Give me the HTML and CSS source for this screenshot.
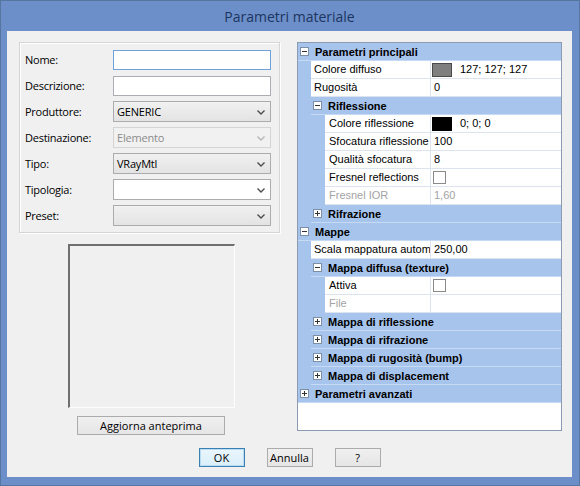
FILE: index.html
```html
<!DOCTYPE html>
<html lang="it">
<head>
<meta charset="utf-8">
<title>Parametri materiale</title>
<link rel="stylesheet" href="styles.css">
</head>
<body>
<div class="window">
  <div class="titlebar">Parametri materiale</div>
  <div class="client">
    <div class="main">
      <div class="left">
        <div class="group">
          <div class="field"><span class="lbl">Nome:</span><div class="input focus"></div></div>
          <div class="field"><span class="lbl">Descrizione:</span><div class="input"></div></div>
          <div class="field"><span class="lbl">Produttore:</span><div class="select">GENERIC<svg class="chev" viewBox="0 0 8 5" width="8" height="5"><polyline points="0.5,0.5 4,4 7.5,0.5" fill="none" stroke="#4d4d4d" stroke-width="1.4"/></svg></div></div>
          <div class="field"><span class="lbl">Destinazione:</span><div class="select disabled">Elemento<svg class="chev" viewBox="0 0 8 5" width="8" height="5"><polyline points="0.5,0.5 4,4 7.5,0.5" fill="none" stroke="#b5b5b5" stroke-width="1.4"/></svg></div></div>
          <div class="field"><span class="lbl">Tipo:</span><div class="select">VRayMtl<svg class="chev" viewBox="0 0 8 5" width="8" height="5"><polyline points="0.5,0.5 4,4 7.5,0.5" fill="none" stroke="#4d4d4d" stroke-width="1.4"/></svg></div></div>
          <div class="field"><span class="lbl">Tipologia:</span><div class="select white"><svg class="chev" viewBox="0 0 8 5" width="8" height="5"><polyline points="0.5,0.5 4,4 7.5,0.5" fill="none" stroke="#4d4d4d" stroke-width="1.4"/></svg></div></div>
          <div class="field"><span class="lbl">Preset:</span><div class="select"><svg class="chev" viewBox="0 0 8 5" width="8" height="5"><polyline points="0.5,0.5 4,4 7.5,0.5" fill="none" stroke="#4d4d4d" stroke-width="1.4"/></svg></div></div>
        </div>
        <div class="preview"></div>
        <button class="btn preview-btn">Aggiorna anteprima</button>
      </div>
      <div class="grid">
        <div class="row cat"><div class="cbody"><span class="exp minus"></span>Parametri principali</div></div>
        <div class="row"><div class="ind l1"></div><div class="name n1">Colore diffuso</div><div class="val"><span class="swatch gray"></span>127; 127; 127</div></div>
        <div class="row"><div class="ind l1"></div><div class="name n1">Rugosità</div><div class="val">0</div></div>
        <div class="row cat"><div class="ind l1"></div><div class="cbody"><span class="exp minus"></span>Riflessione</div></div>
        <div class="row"><div class="ind l2"></div><div class="name n2">Colore riflessione</div><div class="val"><span class="swatch black"></span>0; 0; 0</div></div>
        <div class="row"><div class="ind l2"></div><div class="name n2">Sfocatura riflessione</div><div class="val">100</div></div>
        <div class="row"><div class="ind l2"></div><div class="name n2">Qualità sfocatura</div><div class="val">8</div></div>
        <div class="row"><div class="ind l2"></div><div class="name n2">Fresnel reflections</div><div class="val"><span class="check"></span></div></div>
        <div class="row"><div class="ind l2"></div><div class="name n2 dis">Fresnel IOR</div><div class="val dis">1,60</div></div>
        <div class="row cat"><div class="ind l1"></div><div class="cbody"><span class="exp plus"></span>Rifrazione</div></div>
        <div class="row cat"><div class="cbody"><span class="exp minus"></span>Mappe</div></div>
        <div class="row"><div class="ind l1"></div><div class="name n1"><span class="clip">Scala mappatura automatica</span></div><div class="val">250,00</div></div>
        <div class="row cat"><div class="ind l1"></div><div class="cbody"><span class="exp minus"></span>Mappa diffusa (texture)</div></div>
        <div class="row"><div class="ind l2"></div><div class="name n2">Attiva</div><div class="val"><span class="check"></span></div></div>
        <div class="row"><div class="ind l2"></div><div class="name n2 dis">File</div><div class="val"></div></div>
        <div class="row cat"><div class="ind l1"></div><div class="cbody"><span class="exp plus"></span>Mappa di riflessione</div></div>
        <div class="row cat"><div class="ind l1"></div><div class="cbody"><span class="exp plus"></span>Mappa di rifrazione</div></div>
        <div class="row cat"><div class="ind l1"></div><div class="cbody"><span class="exp plus"></span>Mappa di rugosità (bump)</div></div>
        <div class="row cat"><div class="ind l1"></div><div class="cbody"><span class="exp plus"></span>Mappa di displacement</div></div>
        <div class="row cat"><div class="cbody"><span class="exp plus"></span>Parametri avanzati</div></div>
      </div>
    </div>
    <div class="footer">
      <button class="btn default">OK</button>
      <button class="btn">Annulla</button>
      <button class="btn">?</button>
    </div>
  </div>
</div>
</body>
</html>
```
FILE: styles.css
```css
* { box-sizing: border-box; }
html, body { margin: 0; padding: 0; }
body { width: 580px; height: 486px; overflow: hidden; background: #6c8fc9; }

.window {
  width: 580px; height: 486px;
  background: #6c8fc9;
  border: 1px solid #55779f;
  padding: 0 7px 8px 6px;
  display: flex; flex-direction: column;
}
.titlebar {
  height: 30px;
  flex: none;
  text-align: center;
  font-family: "Open Sans", "Noto Sans", sans-serif;
  font-size: 14px;
  line-height: 31px;
  color: #1c3560;
}
.client {
  flex: 1;
  background: #f0f0f0;
  padding: 11px 0 0 12px;
  display: flex; flex-direction: column;
  font-family: "Open Sans", "Noto Sans", sans-serif;
  font-size: 11px;
  color: #000;
}
.main { display: flex; gap: 17px; height: 389px; flex: none; }
.left { width: 261px; display: flex; flex-direction: column; flex: none; }
.left > * { flex: none; }

.group {
  height: 191px;
  border: 1px solid #d5d5d5;
  box-shadow: inset 1px 1px 0 #fff, 1px 1px 0 #fff;
  padding: 6px 8px 0 5px;
}
.field { display: flex; align-items: center; height: 21px; margin-bottom: 5px; }
.lbl { width: 88px; letter-spacing: -0.25px; }
.input {
  width: 158px; height: 20px;
  background: #fff;
  border: 1px solid #abadb3;
}
.input.focus { border-color: #6fa3d9; background: #fffffd; }
.select {
  width: 158px; height: 21px;
  border: 1px solid #acacac;
  background: linear-gradient(#f1f1f1, #e3e3e3);
  display: flex; align-items: center;
  padding-left: 3px;
  position: relative;
  letter-spacing: -0.2px;
}
.select.white { background: #fff; border-color: #acacac; }
.select.disabled { background: #f1f1f1; border-color: #d4d4d4; color: #8b8b8b; }
.chev { position: absolute; right: 5px; top: 8px; }

.preview {
  width: 167px; height: 164px;
  margin: 11px 0 0 49px;
  border-top: 2px solid #6f6f6f;
  border-left: 2px solid #6f6f6f;
  border-right: 1px solid #fdfdfd;
  border-bottom: 1px solid #fdfdfd;
  background: #f0f0f0;
}
.btn {
  font-family: "Open Sans", "Noto Sans", sans-serif;
  font-size: 11px;
  color: #000;
  height: 19px;
  padding: 0;
  border: 1px solid #acacac;
  background: linear-gradient(#f0f0f0, #e5e5e5);
  line-height: 16px;
}
.preview-btn { width: 148px; margin: 8px 0 0 58px; }

.footer { display: flex; justify-content: center; gap: 22px; margin: 17px 12px 0 0; }
.footer .btn { width: 46px; }
.btn.default { border-color: #3c7fb1; background: linear-gradient(#eaf6fd, #d9eef9); box-shadow: inset 0 0 0 1px #b7dcf3; }

/* property grid */
.grid {
  width: 265px; height: 389px;
  flex: none;
  border: 1px solid #8c9bb2;
  background: #fff;
  font-family: "Liberation Sans", Arial, sans-serif;
  font-size: 11px;
}
.row { display: flex; height: 18px; }
.ind { background: #a7c4ec; flex: none; }
.ind.l1 { width: 13px; }
.ind.l2 { width: 27px; }
.cbody {
  flex: 1; display: flex; align-items: center;
  background: #a7c4ec;
  border-bottom: 1px solid #c7daf4;
  font-weight: bold;
  padding-left: 2px;
}
.exp {
  width: 9px; height: 9px;
  border: 1px solid #7d8ea7;
  background: #fff;
  margin-right: 6px;
  position: relative;
  flex: none;
}
.exp::before {
  content: ""; position: absolute; left: 1px; top: 3px; width: 5px; height: 1px; background: #333;
}
.exp.plus::after {
  content: ""; position: absolute; left: 3px; top: 1px; width: 1px; height: 5px; background: #333;
}
.name {
  flex: none;
  background: #fff;
  border-bottom: 1px solid #dde4ef;
  border-right: 1px solid #dde4ef;
  padding-left: 3px;
  white-space: nowrap; overflow: hidden;
  line-height: 17px;
}
.clip { display: block; width: 116px; overflow: hidden; white-space: nowrap; }
.name.n1 { width: 120px; }
.name.n2 { width: 106px; padding-left: 4px; }
.val {
  flex: 1;
  border-bottom: 1px solid #dde4ef;
  padding-left: 3px;
  line-height: 17px;
  display: flex; align-items: center;
  white-space: nowrap;
}
.dis { color: #a3a3a3; }
.swatch { width: 20px; height: 14px; margin: 0 8px 0 -2px; border: 1px solid #4a4a4a; flex: none; }
.swatch.gray { background: #7f7f7f; }
.swatch.black { background: #000; border-color: #000; }
.check { width: 13px; height: 13px; border: 1px solid #8a8a8a; background: #fff; margin-left: -1px; }
```
